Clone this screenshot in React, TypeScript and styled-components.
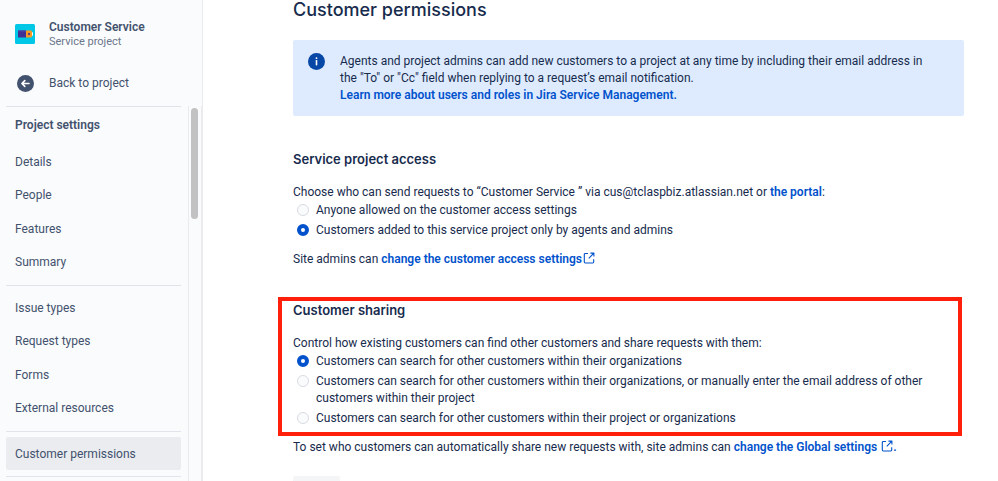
import React from "react";
import styled, { createGlobalStyle } from "styled-components";

const GlobalStyle = createGlobalStyle`
  *, *::before, *::after { box-sizing: border-box; }
  html, body, #root { height: 100%; }
  body {
    margin: 0;
    overflow: hidden;
    background: #ffffff;
    color: #172b4d;
    font-family: Roboto, "Liberation Sans", sans-serif;
    font-size: 12px;
    line-height: 17px;
  }
  h1, h2, p, ul { margin: 0; padding: 0; }
  ul { list-style: none; }
`;

const Page = styled.div`
  display: grid;
  grid-template-columns: 203px minmax(0, 1fr);
  height: 100vh;
  overflow: hidden;
`;

const Sidebar = styled.aside`
  display: flex;
  flex-direction: column;
  min-height: 0;
  padding-bottom: 4px;
  background: #fafbfc;
  border-right: 1px solid #ebebed;
  color: #42526e;
`;

const ProjectHeader = styled.div`
  display: grid;
  grid-template-columns: 20px 1fr;
  align-items: center;
  column-gap: 14px;
  padding: 19px 15px 0;
`;

const ProjectName = styled.div`
  font-weight: 600;
  line-height: 16px;
`;

const ProjectType = styled.div`
  color: #6b778c;
  font-size: 11px;
  line-height: 14px;
`;

const BackLink = styled.a`
  display: grid;
  grid-template-columns: 20px 1fr;
  align-items: center;
  column-gap: 14px;
  height: 34px;
  margin: 17px 0 6px;
  padding: 0 15px;
  color: inherit;
  text-decoration: none;

  svg { justify-self: center; }
`;

const ScrollRegion = styled.div`
  display: grid;
  grid-template-columns: minmax(0, 1fr) 14px;
  flex: 1;
  min-height: 0;
`;

const Nav = styled.nav`
  min-height: 0;
  padding: 0 7px 0 6px;
  overflow: hidden;
`;

const NavTitle = styled.h2`
  padding: 10px 9px 11px;
  font-size: 12px;
  font-weight: 600;
  line-height: 17px;
`;

const NavGroup = styled.ul<{ $height: number }>`
  display: grid;
  grid-auto-rows: 1fr;
  height: ${(p) => p.$height}px;
`;

const NavLink = styled.a<{ $active?: boolean }>`
  display: flex;
  align-items: center;
  height: 100%;
  padding: 1px 9px 0;
  border-radius: 2px;
  background: ${(p) => (p.$active ? "#ebecf0" : "transparent")};
  color: inherit;
  text-decoration: none;
`;

const Divider = styled.hr<{ $spaced?: boolean }>`
  height: 1px;
  margin: ${(p) => (p.$spaced ? "6px 0 5px" : "0")};
  border: 0;
  background: #e1e4ea;
`;

const ScrollTrack = styled.div`
  padding: 2px 0 0 2px;
  border-left: 1px solid #ebebed;
  border-right: 1px solid #ebebed;
`;

const ScrollThumb = styled.div`
  width: 7px;
  height: 111px;
  border-radius: 4px;
  background: #c2c2c2;
`;

const Main = styled.main`
  display: flex;
  flex-direction: column;
  min-width: 0;
  padding: 0 34px 0 90px;
`;

const Title = styled.h1`
  font-family: Inter, "Liberation Sans", sans-serif;
  font-size: 18px;
  font-weight: 500;
  line-height: 20px;
`;

const Banner = styled.section`
  display: grid;
  grid-template-columns: 17px 1fr;
  column-gap: 15px;
  margin-top: 20px;
  padding: 13px 24px 12px 15px;
  border-radius: 2px;
  background: #deebff;
`;

const Link = styled.a`
  color: #0052cc;
  font-weight: 600;
  text-decoration: none;

  svg { vertical-align: -1px; }
`;

const Section = styled.section`
  margin-top: 34px;
`;

const Highlight = styled.section`
  margin: 29px 2px 0 -15px;
  padding: 0 10px 5px 11px;
  border: 4px solid #ff1f0a;
`;

const Heading = styled.h2`
  font-family: Inter, "Liberation Sans", sans-serif;
  font-size: 13px;
  font-weight: 600;
  line-height: 18px;
`;

const Intro = styled.p`
  margin-top: 16px;
`;

const Note = styled.p<{ $space: number }>`
  margin-top: ${(p) => p.$space}px;
`;

const Options = styled.div`
  display: flex;
  flex-direction: column;
  gap: 3px;
  margin-top: 1px;
  padding-left: 4px;
`;

const Option = styled.label`
  display: grid;
  grid-template-columns: 12px 1fr;
  column-gap: 7px;
`;

const Radio = styled.input`
  appearance: none;
  width: 12px;
  height: 12px;
  margin: 2px 0 0;
  border: 1px solid #d8dbe2;
  border-radius: 50%;
  background: #fafbfc;

  &:checked {
    border: 4px solid #0052cc;
    background: #ffffff;
  }
`;

const SaveButton = styled.button`
  align-self: flex-start;
  flex: none;
  width: 47px;
  height: 27px;
  margin-top: 20px;
  padding: 0;
  border: 0;
  border-radius: 2px;
  background: #f4f5f7;
`;

const ProjectAvatar = () => (
  <svg width="20" height="20" viewBox="0 0 20 20" aria-hidden="true">
    <rect width="20" height="20" rx="1.5" fill="#00c7e6" />
    <path d="M3 6.5h8v7H3.6a.6.6 0 0 1-.6-.6z" fill="#403294" />
    <path d="M3 6.5h8v1H3z" fill="#5243aa" />
    <path d="M11 6.5h5.2l.8 1v5l-.8 1H11z" fill="#ff991f" />
    <path d="M17 8.2h.4a.6.6 0 0 1 .6.6v2.4a.6.6 0 0 1-.6.6H17z" fill="#ffffff" />
    <path d="M14 8.6l1.3 1.4-1.3 1.4-1.3-1.4z" fill="#403294" />
  </svg>
);

const BackIcon = () => (
  <svg width="17" height="17" viewBox="0 0 17 17" aria-hidden="true">
    <circle cx="8.5" cy="8.5" r="8.5" fill="#42526e" />
    <path
      d="M12 8.5H5M7.8 5.6L4.9 8.5l2.9 2.9"
      fill="none"
      stroke="#ffffff"
      strokeWidth="1.6"
      strokeLinecap="round"
      strokeLinejoin="round"
    />
  </svg>
);

const InfoIcon = () => (
  <svg width="17" height="17" viewBox="0 0 17 17" aria-hidden="true">
    <circle cx="8.5" cy="8.5" r="8.5" fill="#0747a6" />
    <circle cx="8.5" cy="5.2" r="0.9" fill="#ffffff" />
    <rect x="7.7" y="7" width="1.6" height="5.4" rx="0.6" fill="#ffffff" />
  </svg>
);

const ExternalIcon = () => (
  <svg width="13" height="12" viewBox="0 0 13 12" aria-hidden="true">
    <path
      d="M6 1.5H3.2a.9.9 0 0 0-.9.9v7.7c0 .5.4.9.9.9h7.6c.5 0 .9-.4.9-.9V7.3M8.4 1.1h3.5v3.5M11.8 1.2L6.8 6.3"
      fill="none"
      stroke="currentColor"
      strokeWidth="1.1"
      strokeLinejoin="round"
    />
  </svg>
);

const projectItems = ["Details", "People", "Features", "Summary"];
const requestItems = ["Issue types", "Request types", "Forms", "External resources"];

const NavItems = ({ items }: { items: string[] }) => (
  <NavGroup $height={134}>
    {items.map((item) => (
      <li key={item}>
        <NavLink href="#">{item}</NavLink>
      </li>
    ))}
  </NavGroup>
);

type OptionListProps = { name: string; labels: string[]; selected: number };

const OptionList = ({ name, labels, selected }: OptionListProps) => (
  <Options role="radiogroup">
    {labels.map((label, index) => (
      <Option key={label}>
        <Radio type="radio" name={name} defaultChecked={index === selected} />
        <span>{label}</span>
      </Option>
    ))}
  </Options>
);

export default function App() {
  return (
    <>
      <GlobalStyle />
      <Page>
        <Sidebar>
          <ProjectHeader>
            <ProjectAvatar />
            <div>
              <ProjectName>Customer Service</ProjectName>
              <ProjectType>Service project</ProjectType>
            </div>
          </ProjectHeader>
          <BackLink href="#">
            <BackIcon />
            Back to project
          </BackLink>
          <ScrollRegion>
            <Nav aria-label="Project settings">
              <Divider />
              <NavTitle>Project settings</NavTitle>
              <NavItems items={projectItems} />
              <Divider $spaced />
              <NavItems items={requestItems} />
              <Divider $spaced />
              <NavGroup $height={33}>
                <li>
                  <NavLink href="#" $active aria-current="page">
                    Customer permissions
                  </NavLink>
                </li>
              </NavGroup>
              <Divider $spaced />
            </Nav>
            <ScrollTrack>
              <ScrollThumb />
            </ScrollTrack>
          </ScrollRegion>
        </Sidebar>
        <Main>
          <Title>Customer permissions</Title>
          <Banner>
            <InfoIcon />
            <div>
              <p>
                Agents and project admins can add new customers to a project at any time by
                including their email address in the "To" or "Cc" field when replying to a
                request’s email notification.
              </p>
              <Link href="#">Learn more about users and roles in Jira Service Management.</Link>
            </div>
          </Banner>
          <Section>
            <Heading>Service project access</Heading>
            <Intro>
              Choose who can send requests to “Customer Service ” via
              cus@tclaspbiz.atlassian.net or <Link href="#">the portal</Link>:
            </Intro>
            <OptionList
              name="access"
              selected={1}
              labels={[
                "Anyone allowed on the customer access settings",
                "Customers added to this service project only by agents and admins",
              ]}
            />
            <Note $space={12}>
              Site admins can{" "}
              <Link href="#">
                change the customer access settings
                <ExternalIcon />
              </Link>
            </Note>
          </Section>
          <Highlight>
            <Heading>Customer sharing</Heading>
            <Intro>
              Control how existing customers can find other customers and share requests with
              them:
            </Intro>
            <OptionList
              name="sharing"
              selected={0}
              labels={[
                "Customers can search for other customers within their organizations",
                "Customers can search for other customers within their organizations, or manually enter the email address of other customers within their project",
                "Customers can search for other customers within their project or organizations",
              ]}
            />
          </Highlight>
          <Note $space={3}>
            To set who customers can automatically share new requests with, site admins can{" "}
            <Link href="#">
              change the Global settings <ExternalIcon />.
            </Link>
          </Note>
          <SaveButton type="button" aria-label="Save" />
        </Main>
      </Page>
    </>
  );
}
